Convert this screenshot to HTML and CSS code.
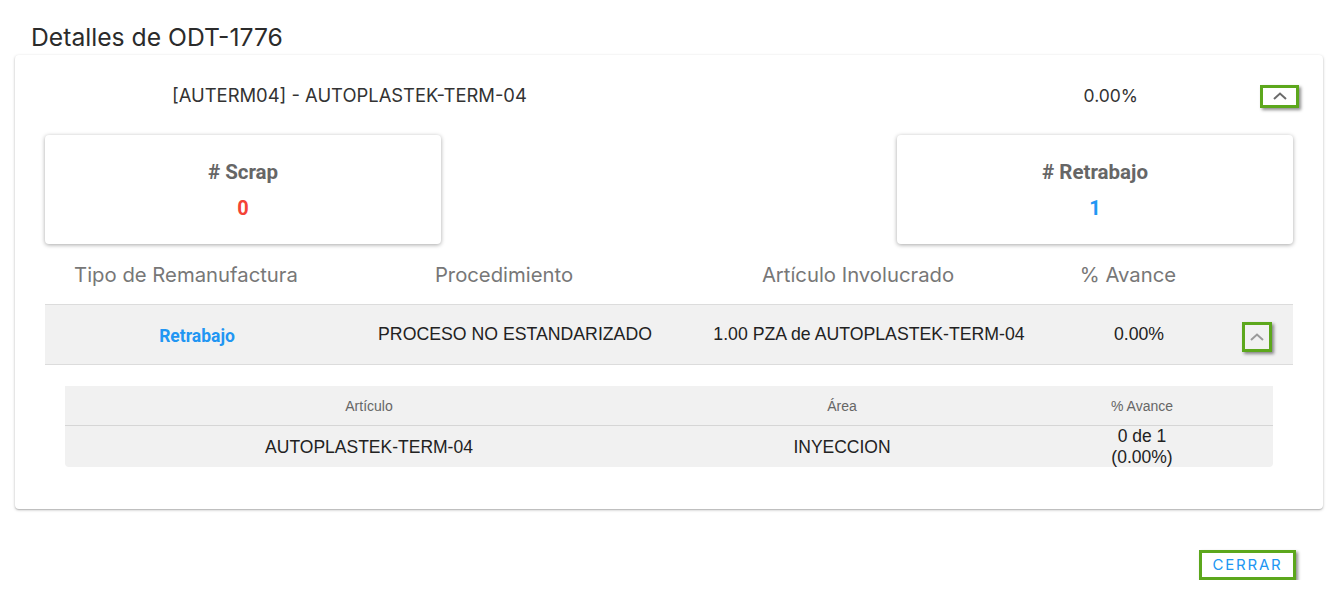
FILE: index.html
```html
<!DOCTYPE html>
<html lang="es">
<head>
<meta charset="utf-8">
<title>Detalles de ODT-1776</title>
<link rel="stylesheet" href="styles.css">
</head>
<body>
<div class="dialog">
  <h2 class="title">Detalles de ODT-1776</h2>
  <div class="card">
    <div class="card-head">
      <span class="head-name">[AUTERM04] - AUTOPLASTEK-TERM-04</span>
      <span class="head-pct">0.00%</span>
      <button class="chev chev-top" aria-label="Colapsar">
        <svg width="16" height="10" viewBox="0 0 16 10"><path d="M2 8 L8 2.5 L14 8" fill="none" stroke="#6b6b6b" stroke-width="2"/></svg>
      </button>
    </div>
    <div class="stats">
      <div class="stat">
        <div class="stat-label"># Scrap</div>
        <div class="stat-value red">0</div>
      </div>
      <div class="stat">
        <div class="stat-label"># Retrabajo</div>
        <div class="stat-value blue">1</div>
      </div>
    </div>
    <div class="grid thead">
      <div>Tipo de Remanufactura</div>
      <div>Procedimiento</div>
      <div>Artículo Involucrado</div>
      <div>% Avance</div>
      <div></div>
    </div>
    <div class="grid trow">
      <div class="link">Retrabajo</div>
      <div>PROCESO NO ESTANDARIZADO</div>
      <div>1.00 PZA de AUTOPLASTEK-TERM-04</div>
      <div>0.00%</div>
      <div class="cell-btn">
        <button class="chev chev-row" aria-label="Colapsar">
          <svg width="16" height="10" viewBox="0 0 16 10"><path d="M2 8 L8 2.5 L14 8" fill="none" stroke="#9a9a9a" stroke-width="2"/></svg>
        </button>
      </div>
    </div>
    <div class="sub">
      <div class="subgrid subhead">
        <div>Artículo</div>
        <div>Área</div>
        <div>% Avance</div>
      </div>
      <div class="subgrid subrow">
        <div>AUTOPLASTEK-TERM-04</div>
        <div>INYECCION</div>
        <div>0 de 1<br>(0.00%)</div>
      </div>
    </div>
  </div>
  <div class="actions">
    <button class="close">CERRAR</button>
  </div>
</div>
</body>
</html>
```

FILE: styles.css
```css
html, body {
  margin: 0;
  padding: 0;
  background: #ffffff;
}
body {
  font-family: Inter, Roboto, "Liberation Sans", Arial, sans-serif;
  color: #333333;
}
.dialog {
  padding: 24px 13px 0 15px;
}
.title {
  margin: 0 0 4px 16px;
  font-size: 24.7px;
  font-weight: 400;
  line-height: 27px;
  color: #2b2b2b;
}
.card {
  background: #fff;
  border-radius: 4px;
  box-shadow: 0 1px 3px rgba(0,0,0,0.25), 0 1px 1px rgba(0,0,0,0.12);
  padding: 0 30px 42px 30px;
}
.card-head {
  display: flex;
  align-items: center;
  height: 80px;
}
.head-name {
  margin-left: 127px;
  font-size: 18.4px;
  color: #333;
}
.head-pct {
  margin-left: auto;
  margin-right: 122px;
  font-size: 17.5px;
  color: #333;
}
.chev {
  display: flex;
  align-items: center;
  justify-content: center;
  background: transparent;
  border: 3px solid #5ca71c;
  box-shadow: 2px 2px 3px rgba(0,0,0,0.45);
  padding: 0;
  cursor: pointer;
}
.chev-top {
  width: 39px;
  height: 23px;
  margin-right: -6px;
  margin-top: 2px;
  background: #fff;
}
.stats {
  display: flex;
  justify-content: space-between;
}
.stat {
  width: 396px;
  height: 109px;
  border-radius: 4px;
  box-shadow: 0 1px 4px rgba(0,0,0,0.35);
  display: flex;
  flex-direction: column;
  align-items: center;
  justify-content: center;
  gap: 14px;
  background: #fff;
}
.stat-label {
  font-family: Roboto, "Liberation Sans", Arial, sans-serif;
  font-size: 20.5px;
  font-weight: 700;
  color: #666666;
  line-height: 22px;
  padding-top: 1px;
}
.stat-value {
  font-family: Roboto, "Liberation Sans", Arial, sans-serif;
  font-size: 20px;
  font-weight: 700;
  line-height: 22px;
}
.red { color: #f44336; }
.blue { color: #2196f3; }
.grid {
  display: grid;
  grid-template-columns: 304px 332px 376px 164px 1fr;
  align-items: center;
  text-align: center;
}
.thead {
  height: 60px;
  font-size: 20.3px;
  color: #777777;
}
.thead > div {
  margin-right: 22px;
}
.trow {
  height: 59px;
  background: #f1f1f1;
  border-top: 1px solid #dcdcdc;
  border-bottom: 1px solid #dcdcdc;
  font-family: "Liberation Sans", Arial, sans-serif;
  font-size: 17.7px;
  color: #222;
}
.link {
  font-family: Roboto, "Liberation Sans", Arial, sans-serif;
  color: #2196f3;
  font-weight: 700;
  font-size: 17.5px;
  padding-top: 2px;
}
.cell-btn {
  display: flex;
  justify-content: center;
}
.chev-row {
  width: 30px;
  height: 30px;
  margin-right: 0;
  margin-top: 4px;
}
.sub {
  margin: 21px 20px 0 20px;
  background: #f1f1f1;
  border-radius: 0 0 4px 4px;
  font-family: "Liberation Sans", Arial, sans-serif;
}
.subgrid {
  display: grid;
  grid-template-columns: 608px 338px 1fr;
  align-items: center;
  text-align: center;
}
.subhead {
  height: 39px;
  font-size: 14px;
  color: #666;
  border-bottom: 1px solid #d6d6d6;
}
.subrow {
  height: 41px;
  font-size: 17.5px;
  color: #222;
  line-height: 21px;
}
.actions {
  display: flex;
  justify-content: flex-end;
  padding: 41px 27px 0 0;
}
.close {
  font-family: Inter, Roboto, "Liberation Sans", Arial, sans-serif;
  background: #fff;
  border: 3px solid #5ca71c;
  box-shadow: 2px 2px 3px rgba(0,0,0,0.45);
  color: #2196f3;
  font-size: 15px;
  letter-spacing: 1.8px;
  width: 97px;
  height: 30px;
  padding: 0 0 2px 0;
  cursor: pointer;
}
```
